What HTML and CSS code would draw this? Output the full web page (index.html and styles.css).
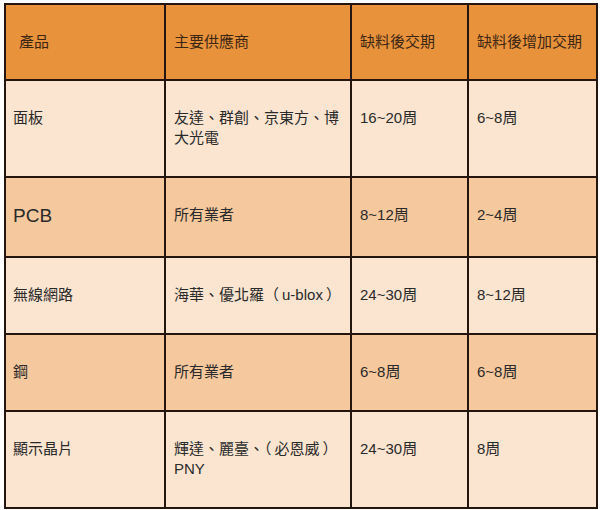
FILE: index.html
```html
<!DOCTYPE html>
<html lang="zh-Hant">
<head>
<meta charset="utf-8">
<title>缺料交期</title>
<link rel="stylesheet" href="styles.css">
</head>
<body>
<table class="grid">
  <colgroup>
    <col class="c1"><col class="c2"><col class="c3"><col class="c4">
  </colgroup>
  <thead>
    <tr class="head">
      <th class="first">產品</th>
      <th>主要供應商</th>
      <th>缺料後交期</th>
      <th>缺料後增加交期</th>
    </tr>
  </thead>
  <tbody>
    <tr class="light">
      <td>面板</td>
      <td>友達、群創、京東方、博大光電</td>
      <td>16~20周</td>
      <td>6~8周</td>
    </tr>
    <tr class="dark">
      <td class="big">PCB</td>
      <td>所有業者</td>
      <td>8~12周</td>
      <td>2~4周</td>
    </tr>
    <tr class="light">
      <td>無線網路</td>
      <td>海華、優北羅<span class="po">（</span>u-blox<span class="pc">）</span></td>
      <td>24~30周</td>
      <td>8~12周</td>
    </tr>
    <tr class="dark">
      <td>鋼</td>
      <td>所有業者</td>
      <td>6~8周</td>
      <td>6~8周</td>
    </tr>
    <tr class="light">
      <td>顯示晶片</td>
      <td>輝達、麗臺、<span class="po">（</span>必恩威<span class="pc">）</span>PNY</td>
      <td>24~30周</td>
      <td>8周</td>
    </tr>
  </tbody>
</table>
</body>
</html>
```

FILE: styles.css
```css
html, body {
  margin: 0;
  background: #ffffff;
}
body {
  padding: 3px 0 0 4px;
  font-family: "Liberation Sans", "Noto Sans CJK TC", sans-serif;
  font-size: 15px;
  color: #2a2a2a;
}
.grid {
  border-collapse: collapse;
  table-layout: fixed;
  width: 592px;
}
.c1 { width: 160px; }
.c2 { width: 186px; }
.c3 { width: 117px; }
.c4 { width: 129px; }
.grid th,
.grid td {
  border: 2px solid #24160e;
  padding: 27px 2px 28px 8px;
  line-height: 20px;
  text-align: left;
  vertical-align: top;
  font-weight: normal;
}
.grid th { padding-bottom: 27px; }
.grid td:first-child { padding-left: 7px; }
.grid th.first { padding-left: 13px; }
.head { background: #e8923c; color: #3b2614; }
.dark { background: #f6c89d; }
.light { background: #fbe5d1; }
.grid td.big {
  font-size: 19px;
  line-height: 26px;
  padding-top: 25px;
  padding-bottom: 27px;
}
.po { padding-right: 3px; }
.pc { padding-left: 3px; }
```
